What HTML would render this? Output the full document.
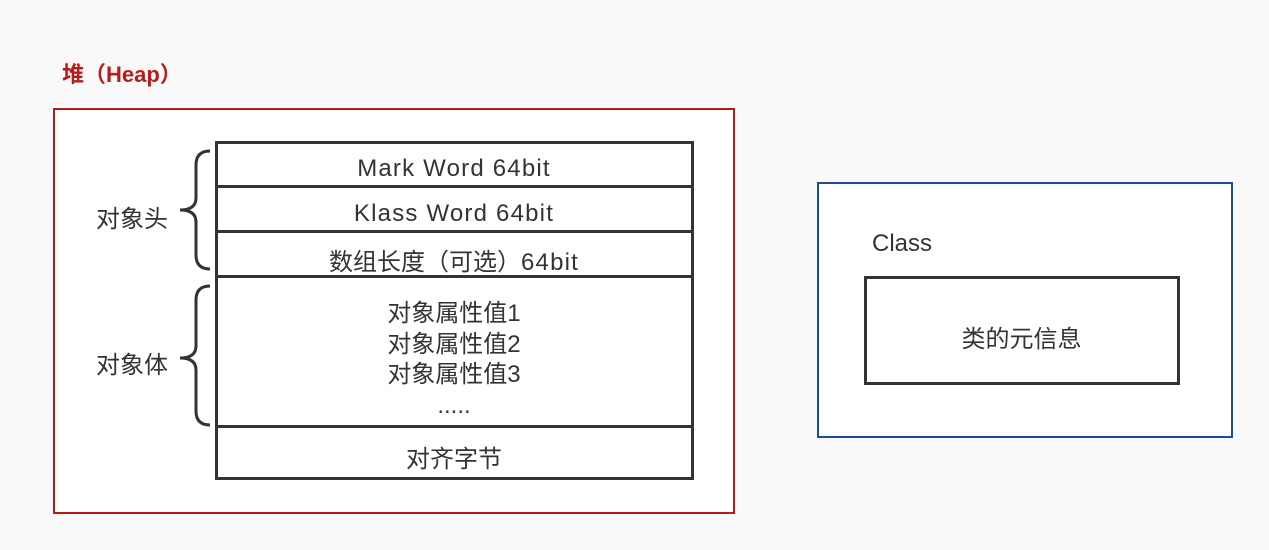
<!DOCTYPE html>
<html><head><style>
body{margin:0;width:1269px;height:550px;background:#f9f9f9;position:relative;font-family:"Liberation Sans","Noto Sans CJK SC",sans-serif;overflow:hidden}
.a{position:absolute}
.t{position:absolute;font-size:24px;color:#333;text-align:center;white-space:nowrap}
.l{letter-spacing:1.2px}
</style></head><body>
<div class="a" style="left:62px;top:57px;font-size:22px;font-weight:bold;color:#b71c1c">堆（Heap）</div>
<div class="a" style="left:53px;top:108px;width:678px;height:402px;border:2.5px solid #b71c1c;background:#fff"></div>
<div class="a" style="left:215px;top:141px;width:473px;height:333px;border:3px solid #333;background:#fff"></div>
<div class="a" style="left:216px;top:185px;width:476px;height:3px;background:#333"></div>
<div class="a" style="left:216px;top:230px;width:476px;height:3px;background:#333"></div>
<div class="a" style="left:216px;top:275px;width:476px;height:3px;background:#333"></div>
<div class="a" style="left:216px;top:425px;width:476px;height:3px;background:#333"></div>
<div class="t l" style="left:216px;width:476px;top:155px">Mark Word 64bit</div>
<div class="t l" style="left:216px;width:476px;top:200px">Klass Word 64bit</div>
<div class="t" style="left:216px;width:476px;top:242px">数组长度（可选）<span class="l">64bit</span></div>
<div class="t" style="left:216px;width:476px;top:299px;line-height:30.5px">对象属性值1<br>对象属性值2<br>对象属性值3<br>.....</div>
<div class="t" style="left:216px;width:476px;top:439px">对齐字节</div>
<div class="t" style="left:96px;top:199px">对象头</div>
<div class="t" style="left:96px;top:345px">对象体</div>
<svg class="a" style="left:0;top:0" width="1269" height="550">
<path d="M210 151 Q196 151 196 165 L196 198 Q196 210 180 210 Q196 210 196 222 L196 255 Q196 269 210 269" fill="none" stroke="#333" stroke-width="3"/>
<path d="M210 286 Q196 286 196 300 L196 346 Q196 358 180 358 Q196 358 196 370 L196 411 Q196 425 210 425" fill="none" stroke="#333" stroke-width="3"/>
</svg>
<div class="a" style="left:817px;top:182px;width:412px;height:252px;border:2.5px solid #1a4d99;background:#fff"></div>
<div class="t" style="left:872px;top:230px">Class</div>
<div class="a" style="left:864px;top:276px;width:310px;height:103px;border:3px solid #333"></div>
<div class="t" style="left:866px;width:311px;top:319px">类的元信息</div>
</body></html>
